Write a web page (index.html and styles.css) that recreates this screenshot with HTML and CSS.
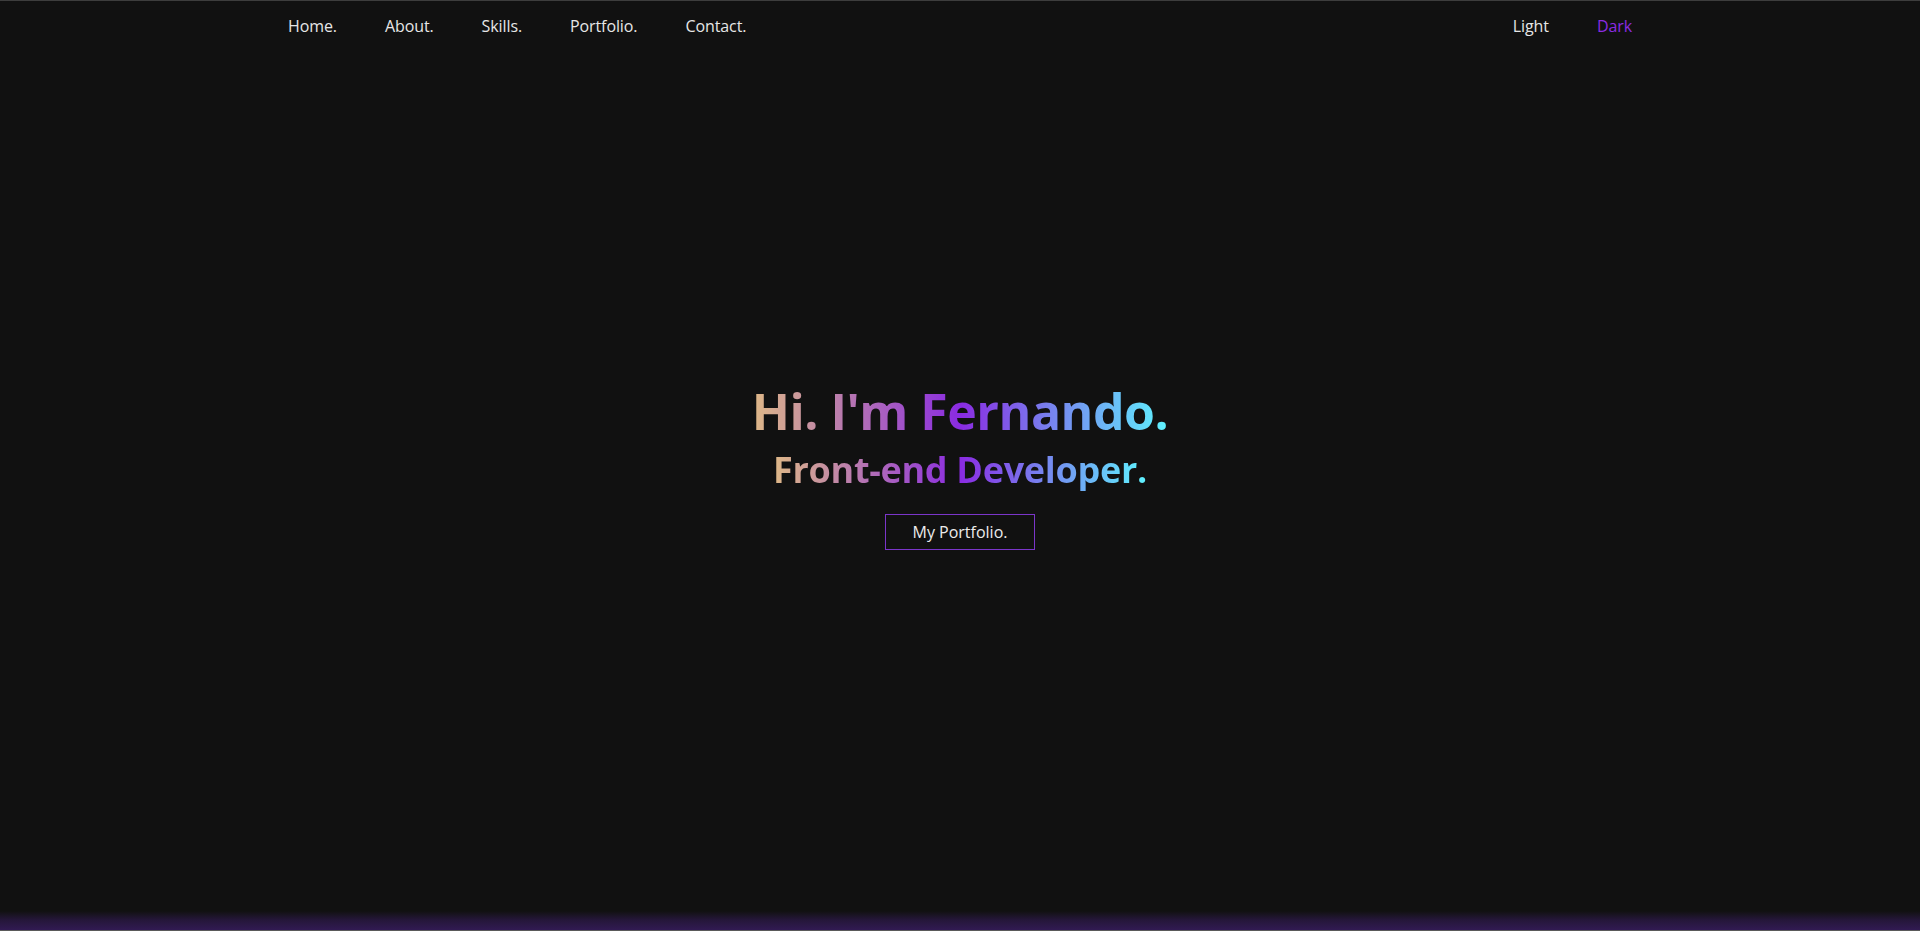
FILE: index.html
```html
<!DOCTYPE html>
<html lang="en">
<head>
<meta charset="utf-8">
<title>Fernando</title>
<link rel="stylesheet" href="styles.css">
</head>
<body>
<div class="page">
  <header class="nav">
    <ul class="nav-links">
      <li><a href="#">Home.</a></li>
      <li><a href="#">About.</a></li>
      <li><a href="#">Skills.</a></li>
      <li><a href="#">Portfolio.</a></li>
      <li><a href="#">Contact.</a></li>
    </ul>
    <ul class="nav-links">
      <li><a href="#">Light</a></li>
      <li><a href="#" class="active">Dark</a></li>
    </ul>
  </header>
  <main class="hero">
    <h1 class="title gradient">Hi. I'm Fernando.</h1>
    <h2 class="subtitle gradient">Front-end Developer.</h2>
    <a href="#" class="btn">My Portfolio.</a>
  </main>
  <div class="glow"></div>
</div>
</body>
</html>
```
FILE: styles.css
```css
* { box-sizing: border-box; }
html, body { margin: 0; padding: 0; }
body {
  background: #111111;
  color: #e8e8e8;
  font-family: "Open Sans", "Noto Sans", sans-serif;
  overflow: hidden;
}
.page {
  height: 100vh;
  display: flex;
  flex-direction: column;
  border-top: 1px solid #3d3d3d;
  border-bottom: 1px solid #5a5a5a;
}
.nav {
  width: 70%;
  margin: 0 auto;
  height: 49px;
  display: flex;
  justify-content: space-between;
  align-items: center;
}
.nav-links {
  list-style: none;
  margin: 0;
  padding: 0;
  display: flex;
  gap: 48px;
}
.nav-links a {
  color: #e6e6e6;
  text-decoration: none;
  font-size: 16px;
  letter-spacing: -0.1px;
}
.nav-links a.active { color: #8a2be2; }
.hero {
  flex: 1;
  display: flex;
  flex-direction: column;
  align-items: center;
  justify-content: center;
  padding-bottom: 30px;
}
.gradient {
  background: linear-gradient(to right, #deb887, #8a2be2, #5ff3ff);
  -webkit-background-clip: text;
  background-clip: text;
  color: transparent;
}
.title {
  margin: 0;
  font-size: 50px;
  font-weight: 700;
  line-height: 1.2;
  letter-spacing: -0.5px;
}
.subtitle {
  margin: 7px 0 0;
  font-size: 36px;
  font-weight: 700;
  line-height: 1.2;
  letter-spacing: -0.3px;
}
.btn {
  margin-top: 23px;
  width: 150px;
  height: 36px;
  display: flex;
  align-items: center;
  justify-content: center;
  border: 1px solid #7b35c9;
  color: #ececec;
  text-decoration: none;
  font-size: 16px;
}
.glow {
  height: 19px;
  background: linear-gradient(to bottom, rgba(49, 26, 82, 0), rgba(49, 26, 82, 0.6) 45%, #311a52);
}
```
